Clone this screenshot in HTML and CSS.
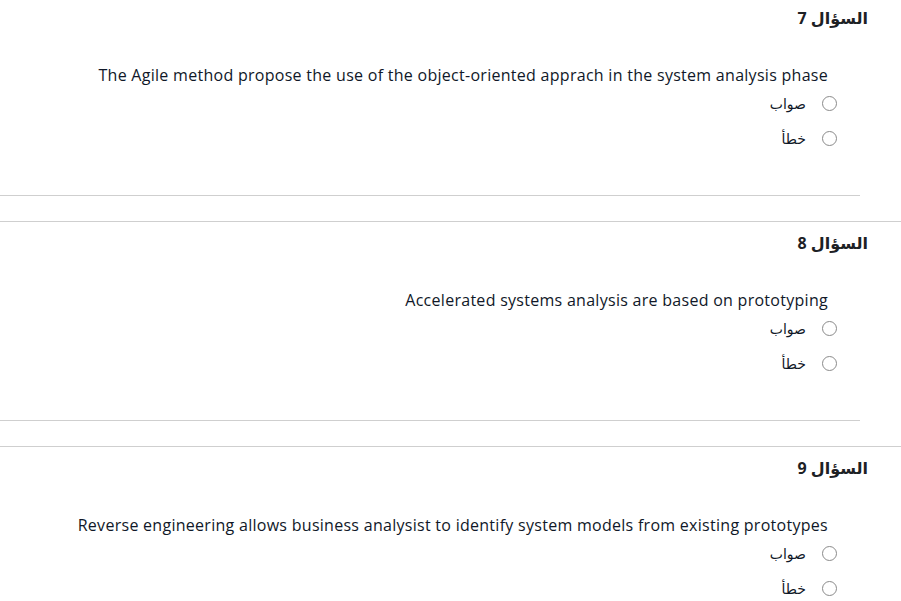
FILE: index.html
```html
<!DOCTYPE html>
<html lang="ar" dir="rtl">
<head>
<meta charset="utf-8">
<title>Quiz</title>
<link rel="stylesheet" href="styles.css">
</head>
<body>
<div class="quiz">
  <div class="que">
    <h3 class="que-title">السؤال 7</h3>
    <div class="formulation">
      <div class="qtext">The Agile method propose the use of the object-oriented apprach in the system analysis phase</div>
      <div class="answer">
        <label class="option"><input type="radio" name="q7"><span>صواب</span></label>
        <label class="option"><input type="radio" name="q7"><span>خطأ</span></label>
      </div>
    </div>
  </div>
  <div class="que">
    <h3 class="que-title">السؤال 8</h3>
    <div class="formulation">
      <div class="qtext">Accelerated systems analysis are based on prototyping</div>
      <div class="answer">
        <label class="option"><input type="radio" name="q8"><span>صواب</span></label>
        <label class="option"><input type="radio" name="q8"><span>خطأ</span></label>
      </div>
    </div>
  </div>
  <div class="que">
    <h3 class="que-title">السؤال 9</h3>
    <div class="formulation">
      <div class="qtext">Reverse engineering allows business analysist to identify system models from existing prototypes</div>
      <div class="answer">
        <label class="option"><input type="radio" name="q9"><span>صواب</span></label>
        <label class="option"><input type="radio" name="q9"><span>خطأ</span></label>
      </div>
    </div>
  </div>
</div>
</body>
</html>
```
FILE: styles.css
```css
html, body {
  margin: 0;
  padding: 0;
  background: #ffffff;
}
body {
  direction: rtl;
  font-family: "Open Sans", "DejaVu Sans", sans-serif;
  font-size: 15px;
  color: #1d2125;
}
.quiz {
  display: flex;
  flex-direction: column;
}
.que {
  border-top: 1px solid #cfcfcf;
  padding-top: 9px;
  padding-bottom: 25px;
}
.que:first-child {
  border-top: none;
  padding-top: 6px;
}
.que-title {
  margin: 0 33px 0 0;
  font-size: 16px;
  font-weight: 700;
  line-height: 24px;
}
.formulation {
  margin: 34px 41px 0 0;
  padding-bottom: 39px;
  border-bottom: 1px solid #cfcfcf;
}
.qtext {
  padding-right: 32px;
  font-size: 16px;
  letter-spacing: 0.28px;
  line-height: 22px;
  color: #101828;
}
.answer {
  display: flex;
  flex-direction: column;
  padding-right: 23px;
}
.option {
  display: flex;
  align-items: center;
  gap: 16px;
  height: 35px;
}
.option input {
  appearance: none;
  -webkit-appearance: none;
  width: 15px;
  height: 15px;
  margin: 0;
  border: 1px solid #8a8a8a;
  border-radius: 50%;
  background: #fff;
}
.option span {
  font-size: 14px;
  line-height: 22px;
  color: #101828;
}
```
